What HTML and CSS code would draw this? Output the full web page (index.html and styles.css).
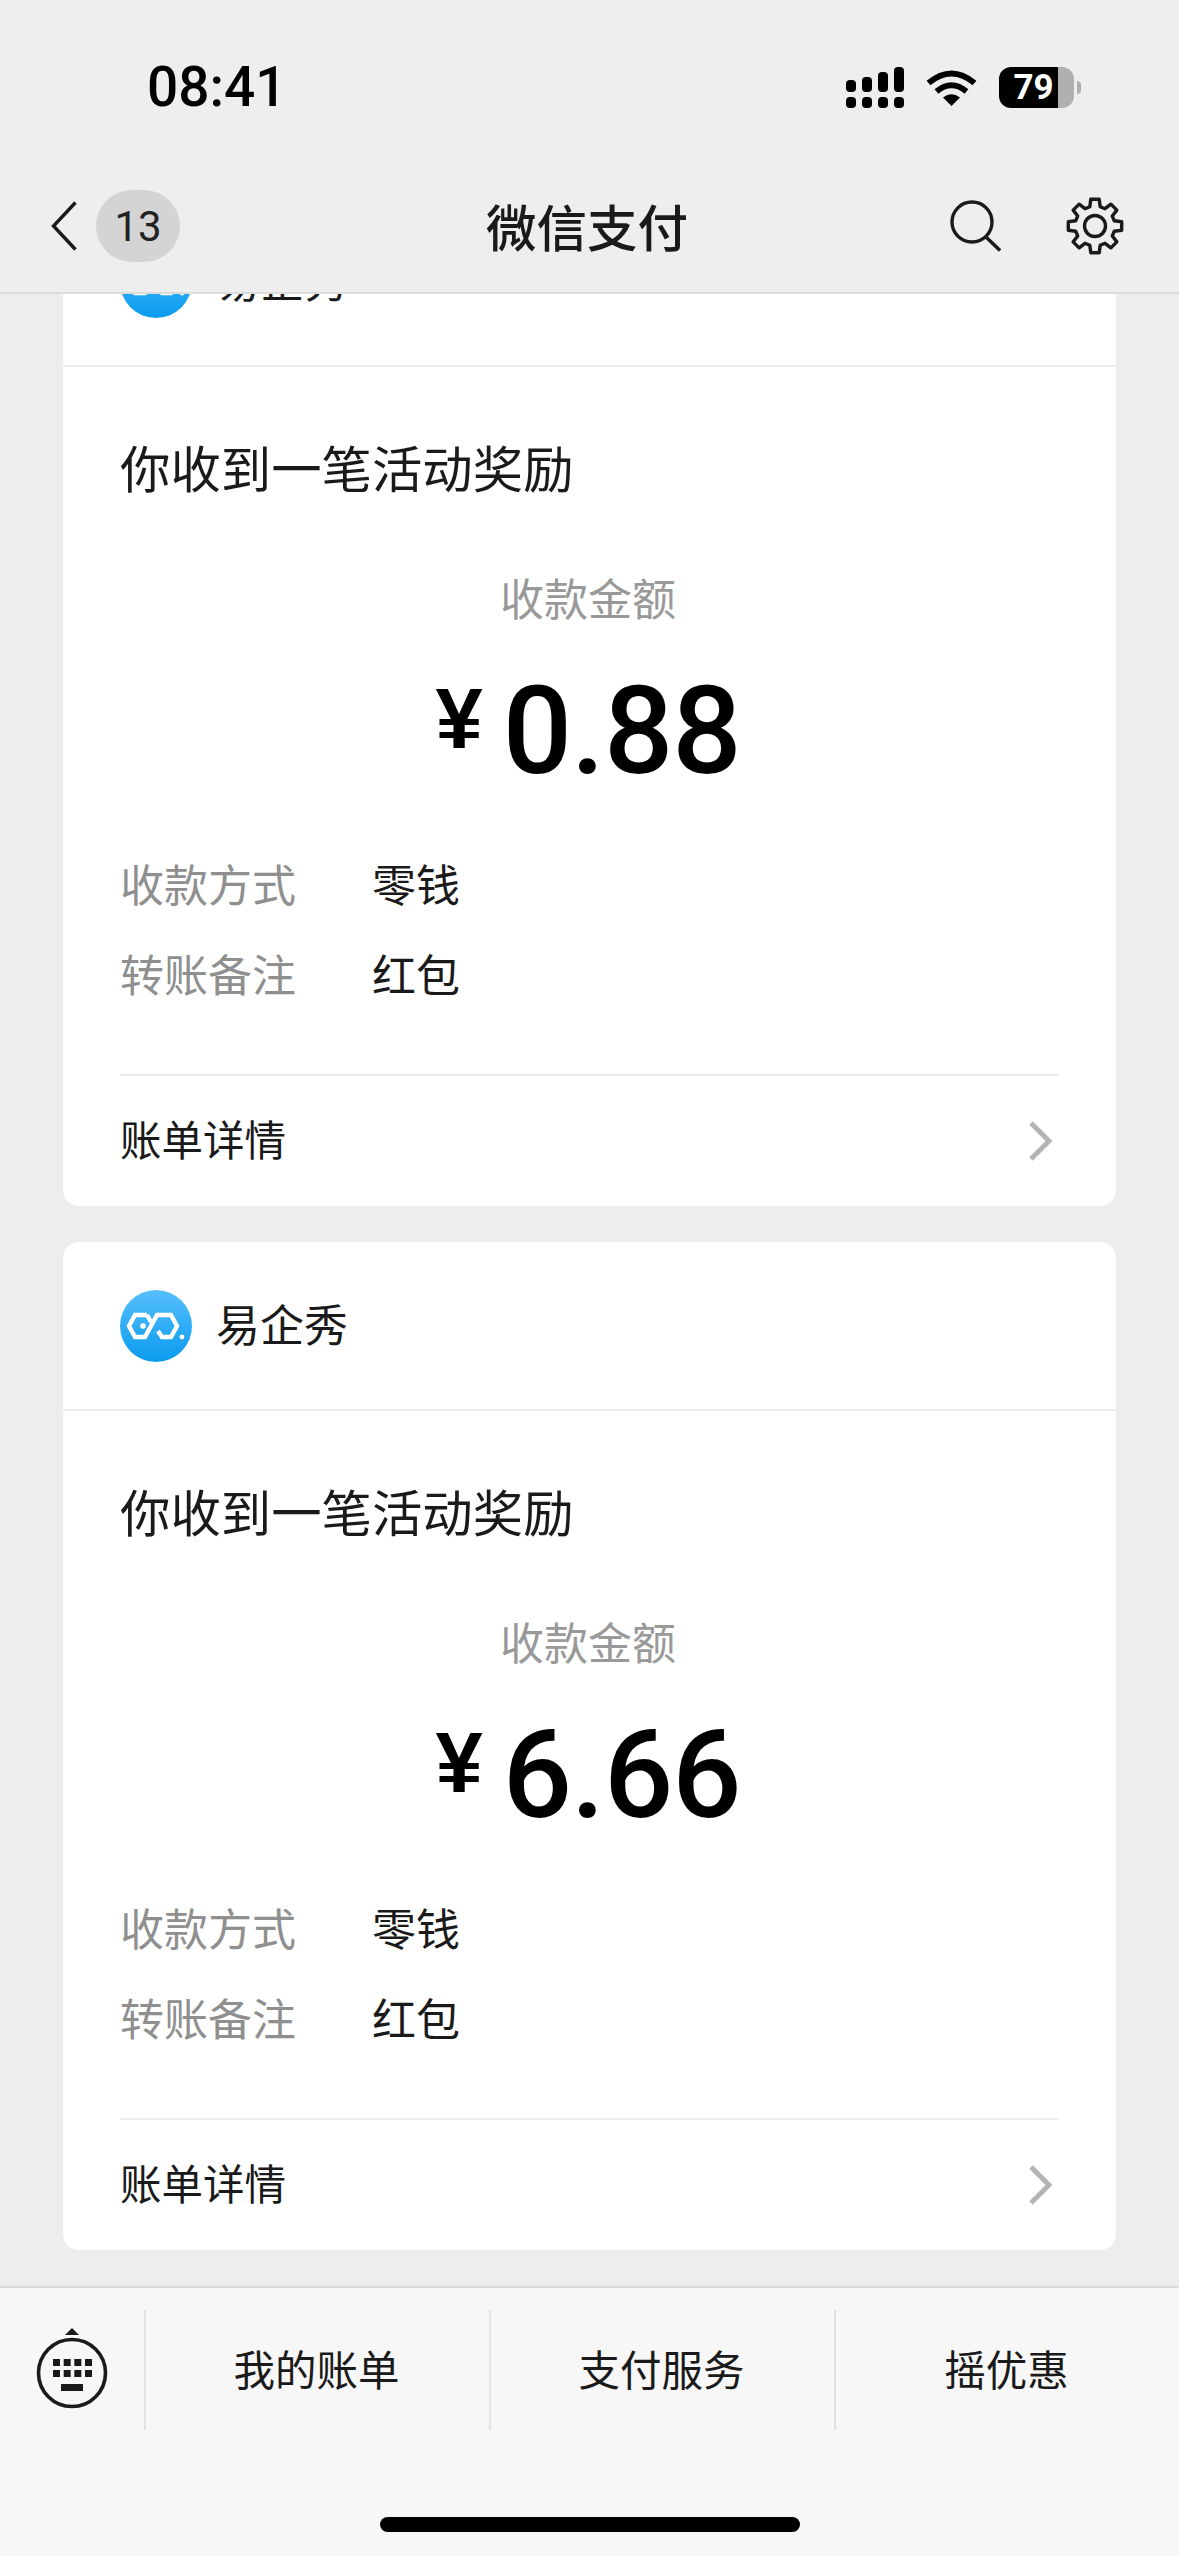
FILE: index.html
```html
<!DOCTYPE html>
<html lang="zh-CN">
<head>
<meta charset="utf-8">
<title>微信支付</title>
<link rel="stylesheet" href="styles.css">
</head>
<body>
<div class="screen">
  <header class="top">
    <div class="status">
      <span class="time">08:41</span>
      <div class="status-icons">
        <svg class="signal" width="58" height="41" viewBox="0 0 58 41">
          <rect x="0" y="13" width="10" height="12" rx="4"/><rect x="16" y="10" width="10" height="15" rx="4"/><rect x="32" y="5" width="10" height="20" rx="4"/><rect x="48" y="0" width="10" height="25" rx="4"/>
          <rect x="0" y="30" width="10" height="11" rx="4"/><rect x="16" y="30" width="10" height="11" rx="4"/><rect x="32" y="30" width="10" height="11" rx="4"/><rect x="48" y="30" width="10" height="11" rx="4"/>
        </svg>
        <svg class="wifi" width="51" height="37" viewBox="0 0 51 37">
          <path d="M2.5 14 Q25.5 -5 48.5 14" fill="none" stroke="#000" stroke-width="6"/>
          <path d="M10.5 22.5 Q25.5 10 40.5 22.5" fill="none" stroke="#000" stroke-width="6"/>
          <path d="M17 28.5 Q25.5 22 34 28.5 L25.5 37 Z"/>
        </svg>
        <div class="battery">
          <div class="battery-body"><span class="battery-level">79</span></div>
          <span class="battery-nub"></span>
        </div>
      </div>
    </div>
    <nav class="nav">
      <div class="nav-left">
        <svg width="26" height="50" viewBox="0 0 26 50"><path d="M24.5 1.5 L2.5 25 L24.5 48.5" fill="none" stroke="#1a1a1a" stroke-width="3.4"/></svg>
        <span class="badge">13</span>
      </div>
      <h1 class="title">微信支付</h1>
      <div class="nav-right">
        <svg width="52" height="52" viewBox="0 0 52 52"><circle cx="23" cy="22" r="20" fill="none" stroke="#1a1a1a" stroke-width="3.4"/><path d="M37 37 L51 50.5" fill="none" stroke="#1a1a1a" stroke-width="3.4"/></svg>
        <svg width="60" height="60" viewBox="0 0 60 60"><polygon points="24.8,10.7 25.8,3.3 34.2,3.3 35.2,10.7 40,12.7 45.9,8.15 51.85,14.1 47.3,20 49.3,24.8 56.7,25.8 56.7,34.2 49.3,35.2 47.3,40 51.85,45.9 45.9,51.85 40,47.3 35.2,49.3 34.2,56.7 25.8,56.7 24.8,49.3 20,47.3 14.1,51.85 8.15,45.9 12.7,40 10.7,35.2 3.3,34.2 3.3,25.8 10.7,24.8 12.7,20 8.15,14.1 14.1,8.15 20,12.7" fill="none" stroke="#1a1a1a" stroke-width="3.4" stroke-linejoin="round"/><circle cx="30" cy="30" r="10.5" fill="none" stroke="#1a1a1a" stroke-width="3.4"/></svg>
      </div>
    </nav>
  </header>

  <main class="feed">
    <article class="card">
      <div class="card-head">
        <svg class="logo" width="72" height="72" viewBox="0 0 72 72"><defs><linearGradient id="lg1" x1="0" y1="0" x2="0" y2="1"><stop offset="0" stop-color="#56bffe"/><stop offset="1" stop-color="#0a9bed"/></linearGradient></defs><circle cx="36" cy="36" r="36" fill="url(#lg1)"/><path d="M27 25 H15 L9 36 L15 47 H25 L37 25 H51 L57 36 L51 47 H42 L38 41 M27 25 L31 32" fill="none" stroke="#fff" stroke-width="4.4"/><circle cx="23" cy="36" r="2.8" fill="#fff"/><circle cx="62" cy="47" r="2.4" fill="#fff"/></svg>
        <span class="brand">易企秀</span>
      </div>
      <div class="card-body">
        <div class="msg">你收到一笔活动奖励</div>
        <div class="amount-label">收款金额</div>
        <div class="amount"><span class="yen">¥</span><span class="num">0.88</span></div>
        <div class="row"><span class="key">收款方式</span><span class="val">零钱</span></div>
        <div class="row row-next"><span class="key">转账备注</span><span class="val">红包</span></div>
        <div class="detail">
          <span class="detail-text">账单详情</span>
          <svg width="24" height="40" viewBox="0 0 24 40"><path d="M3 2 L21 20 L3 38" fill="none" stroke="#b4b4b4" stroke-width="5"/></svg>
        </div>
      </div>
    </article>
    <article class="card">
      <div class="card-head">
        <svg class="logo" width="72" height="72" viewBox="0 0 72 72"><defs><linearGradient id="lg2" x1="0" y1="0" x2="0" y2="1"><stop offset="0" stop-color="#56bffe"/><stop offset="1" stop-color="#0a9bed"/></linearGradient></defs><circle cx="36" cy="36" r="36" fill="url(#lg2)"/><path d="M27 25 H15 L9 36 L15 47 H25 L37 25 H51 L57 36 L51 47 H42 L38 41 M27 25 L31 32" fill="none" stroke="#fff" stroke-width="4.4"/><circle cx="23" cy="36" r="2.8" fill="#fff"/><circle cx="62" cy="47" r="2.4" fill="#fff"/></svg>
        <span class="brand">易企秀</span>
      </div>
      <div class="card-body">
        <div class="msg">你收到一笔活动奖励</div>
        <div class="amount-label">收款金额</div>
        <div class="amount"><span class="yen">¥</span><span class="num">6.66</span></div>
        <div class="row"><span class="key">收款方式</span><span class="val">零钱</span></div>
        <div class="row row-next"><span class="key">转账备注</span><span class="val">红包</span></div>
        <div class="detail">
          <span class="detail-text">账单详情</span>
          <svg width="24" height="40" viewBox="0 0 24 40"><path d="M3 2 L21 20 L3 38" fill="none" stroke="#b4b4b4" stroke-width="5"/></svg>
        </div>
      </div>
    </article>
  </main>

  <footer class="tabbar">
    <div class="tabs">
      <div class="tab-kbd">
        <svg width="80" height="84" viewBox="0 0 80 84" fill="#1a1a1a">
          <path d="M33 9 L40 2 L47 9 Z"/>
          <circle cx="40" cy="47" r="33.5" fill="none" stroke="#1a1a1a" stroke-width="3.6"/>
          <rect x="21" y="33" width="7" height="7"/><rect x="31.7" y="33" width="7" height="7"/><rect x="42.3" y="33" width="7" height="7"/><rect x="53" y="33" width="7" height="7"/>
          <rect x="21" y="44" width="7" height="7"/><rect x="31.7" y="44" width="7" height="7"/><rect x="42.3" y="44" width="7" height="7"/><rect x="53" y="44" width="7" height="7"/>
          <rect x="29" y="58" width="22" height="7"/>
        </svg>
      </div>
      <div class="tab">我的账单</div>
      <div class="tab">支付服务</div>
      <div class="tab">摇优惠</div>
    </div>
    <span class="home-bar"></span>
  </footer>
</div>
</body>
</html>
```
FILE: styles.css
```css
* { box-sizing: border-box; }
html, body { margin: 0; padding: 0; }
body {
  width: 1179px;
  height: 2556px;
  overflow: hidden;
  background: #ededed;
  color: #1a1a1a;
  font-family: "Noto Sans CJK SC", "Noto Sans", sans-serif;
}
.screen {
  display: flex;
  flex-direction: column;
  height: 2556px;
  position: relative;
}
.top {
  flex: none;
  height: 294px;
  background: #eeeeee;
  border-bottom: 2px solid #dcdcdc;
  position: relative;
  z-index: 2;
}
.status {
  height: 160px;
  padding: 14px 98px 0 147px;
  display: flex;
  align-items: center;
  justify-content: space-between;
}
.time {
  font-family: Roboto, sans-serif;
  font-weight: 500;
  font-size: 55px;
  color: #000;
  line-height: 1;
}
.status-icons {
  display: flex;
  align-items: center;
  gap: 22px;
}
.battery { display: flex; align-items: center; gap: 3px; }
.battery-body {
  width: 75px;
  height: 41px;
  border-radius: 12px;
  background: linear-gradient(to right, #000 0, #000 59px, #b0b0b0 59px);
  display: flex;
  align-items: center;
}
.battery-level {
  width: 59px;
  padding-left: 10px;
  text-align: center;
  font-family: Roboto, sans-serif;
  font-weight: 700;
  font-size: 35px;
  line-height: 1;
  color: #fff;
}
.battery-nub {
  width: 4px;
  height: 13px;
  background: #b0b0b0;
  border-radius: 0 5px 5px 0;
}
.nav {
  height: 132px;
  padding: 0 54px 0 51px;
  display: grid;
  grid-template-columns: 1fr auto 1fr;
  align-items: center;
}
.nav-left { display: flex; align-items: center; gap: 19px; }
.badge {
  width: 84px;
  height: 72px;
  border-radius: 36px;
  background: #d4d4d4;
  display: flex;
  align-items: center;
  justify-content: center;
  font-family: Roboto, sans-serif;
  font-size: 42px;
  color: #222;
}
.title {
  margin: -3px 2px 0 0;
  font-size: 50.5px;
  font-weight: 500;
  color: #1a1a1a;
  line-height: 60px;
}
.nav-right {
  display: flex;
  align-items: center;
  justify-content: flex-end;
  gap: 64px;
}
.feed {
  flex: 1;
  min-height: 0;
  overflow: hidden;
  padding: 0 63px;
  display: flex;
  flex-direction: column;
  gap: 36px;
}
.card {
  flex: none;
  height: 1008px;
  background: #fff;
  border-radius: 16px;
}
.card:first-child { margin-top: -96px; }
.card-head {
  height: 169px;
  padding-left: 57px;
  display: flex;
  align-items: center;
  gap: 24px;
  border-bottom: 2px solid #ececec;
}
.logo { flex: none; }
.brand { font-size: 44px; line-height: 60px; color: #1a1a1a; margin-top: -6px; }
.card-body { padding: 70px 57px 0; }
.msg { font-size: 50.4px; line-height: 60px; color: #1a1a1a; }
.amount-label {
  margin-top: 70px;
  padding-right: 3px;
  font-size: 44px;
  line-height: 60px;
  color: #999;
  text-align: center;
}
.amount {
  margin-top: 35px;
  height: 140px;
  display: flex;
  justify-content: center;
  align-items: center;
  color: #000;
  padding-right: 3px;
}
.yen {
  font-family: "Liberation Sans", sans-serif;
  font-weight: 700;
  font-size: 85px;
  line-height: 1;
  margin-right: 20px;
  margin-top: -27px;
}
.num {
  font-family: Roboto, sans-serif;
  font-weight: 500;
  font-size: 122px;
  letter-spacing: -1px;
  line-height: 140px;
}
.row {
  margin-top: 51px;
  display: flex;
  font-size: 44px;
  line-height: 60px;
}
.row-next { margin-top: 30px; }
.key { width: 253px; color: #8f8f8f; }
.val { color: #1a1a1a; margin-left: -1px; }
.detail {
  margin-top: 71px;
  height: 132px;
  border-top: 2px solid #ececec;
  display: flex;
  align-items: center;
  justify-content: space-between;
  font-size: 41.5px;
  color: #1a1a1a;
  padding-right: 7px;
}
.detail-text { margin-top: -6px; }
.tabbar {
  flex: none;
  height: 270px;
  background: #f7f7f7;
  border-top: 2px solid #dadada;
  padding-top: 22px;
}
.tabs {
  display: grid;
  grid-template-columns: 144px repeat(3, 345px);
  height: 120px;
}
.tab-kbd { display: flex; align-items: center; justify-content: center; padding-bottom: 4px; }
.tab {
  border-left: 2px solid #e2e2e2;
  display: flex;
  align-items: center;
  justify-content: center;
  font-size: 41.5px;
  color: #1a1a1a;
  padding: 0 2px 4px 0;
}
.home-bar {
  position: absolute;
  left: 380px;
  bottom: 24px;
  width: 420px;
  height: 15px;
  border-radius: 8px;
  background: #000;
}
```
